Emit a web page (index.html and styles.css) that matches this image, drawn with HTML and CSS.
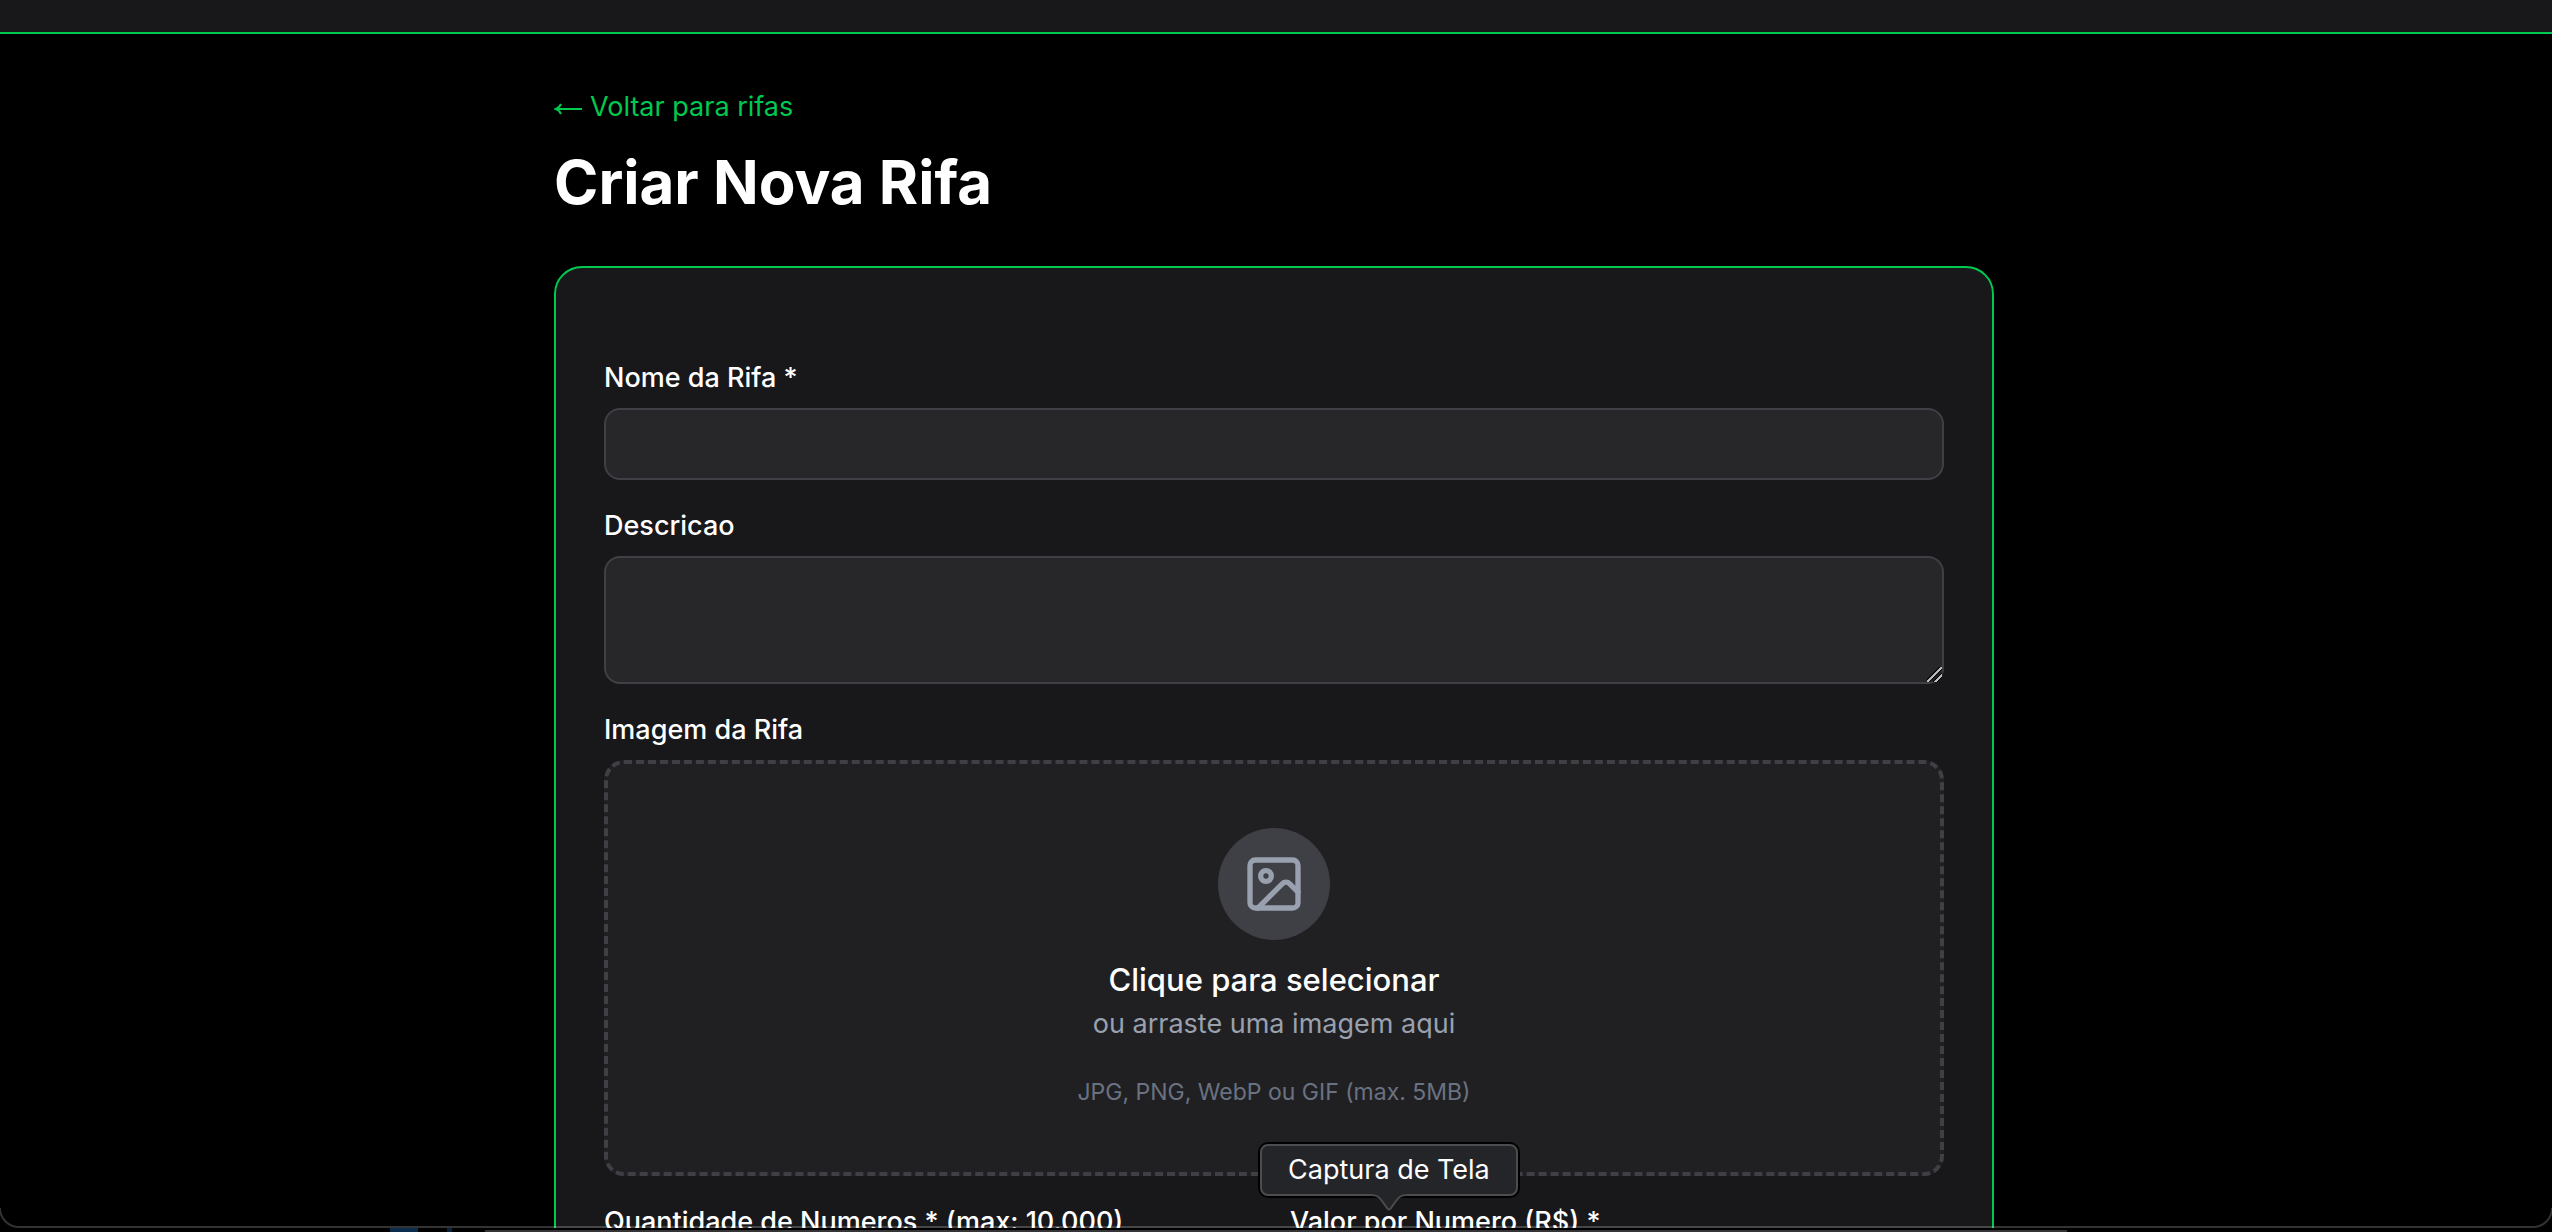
FILE: index.html
```html
<!DOCTYPE html>
<html lang="pt-BR">
<head>
  <meta charset="UTF-8" />
  <title>Criar Nova Rifa</title>
  <link rel="stylesheet" href="styles.css">
</head>
<body>
  <div class="window">
    <header class="navbar"></header>

    <main class="container">
      <a class="back-link" href="#rifas"><svg class="back-arrow" viewBox="0 0 28 12" aria-hidden="true"><path d="M28 6H2M7 1Q5 5 2 6q3 1 5 5" /></svg>Voltar para rifas</a>
      <h1 class="title">Criar Nova Rifa</h1>

      <form class="card">
        <div class="field">
          <label class="label" for="nome">Nome da Rifa *</label>
          <input class="input" id="nome" type="text" required>
        </div>

        <div class="field">
          <label class="label" for="descricao">Descricao</label>
          <textarea class="input textarea" id="descricao"></textarea>
        </div>

        <div class="field">
          <label class="label" for="imagem">Imagem da Rifa</label>
          <button class="dropzone" id="imagem" type="button">
            <span class="dropzone-icon">
              <svg viewBox="0 0 24 24" aria-hidden="true">
                <rect x="3" y="3" width="18" height="18" rx="2" />
                <circle cx="9" cy="9" r="2" />
                <path d="M21 15l-3.086-3.086a2 2 0 0 0-2.828 0L6 21" />
              </svg>
            </span>
            <span class="dropzone-title">Clique para selecionar</span>
            <span class="dropzone-text">ou arraste uma imagem aqui</span>
            <span class="dropzone-hint">JPG, PNG, WebP ou GIF (max. 5MB)</span>
          </button>
        </div>

        <div class="row">
          <div class="field">
            <label class="label" for="quantidade">Quantidade de Numeros * (max: 10.000)</label>
            <input class="input" id="quantidade" type="number" max="10000" required>
          </div>
          <div class="field">
            <label class="label" for="valor">Valor por Numero (R$) *</label>
            <input class="input" id="valor" type="number" required>
          </div>
        </div>
      </form>
    </main>
  </div>

  <div class="desktop">
    <div class="dock"></div>
  </div>

  <div class="tooltip" role="tooltip">
    Captura de Tela
    <svg class="tooltip-arrow" viewBox="0 0 36 20" aria-hidden="true">
      <path class="arrow-fill" d="M0 0v2c6 0 8 2 11 6l5 7q2 3 4 0l5-7c3-4 5-6 11-6V0z" />
      <path class="arrow-line" d="M0 2c6 0 8 2 11 6l5 7q2 3 4 0l5-7c3-4 5-6 11-6" />
    </svg>
  </div>
</body>
</html>
```

FILE: styles.css
```css
* {
  box-sizing: border-box;
}

html, body {
  margin: 0;
  height: 100%;
  overflow: hidden;
  background: #000;
  color: #fff;
  font-family: Inter, "Liberation Sans", sans-serif;
  font-size: 27px;
  line-height: 40px;
}

body {
  display: flex;
  flex-direction: column;
}

.window {
  position: relative;
  flex: 1;
  min-height: 0;
  overflow: hidden;
}

/* window edge, drawn over the page */
.window::after {
  content: "";
  position: absolute;
  inset: -2px -1px 0;
  border: 2px solid rgba(255, 255, 255, 0.2);
  border-top: 0;
  border-radius: 0 0 20px 20px;
  clip-path: inset(calc(100% - 20px) 1px 0);
  pointer-events: none;
}

.navbar {
  height: 34px;
  background: #18181b;
  border-bottom: 2px solid #00c950;
}

.container {
  max-width: 1536px;
  margin: 0 auto;
  padding: 53px 50px 0 46px;
}

.back-link {
  display: flex;
  align-items: center;
  gap: 8px;
  color: #00c950;
  text-decoration: none;
}

.back-arrow {
  width: 28px;
  height: 12px;
  margin-top: 4px;
  fill: none;
  stroke: currentColor;
  stroke-width: 2;
}

.title {
  margin: 15px 0 44px;
  font-size: 60px;
  line-height: 80px;
  font-weight: 700;
}

.card {
  display: flex;
  flex-direction: column;
  gap: 26px;
  padding: 90px 48px 48px;
  background: #18181b;
  border: 2px solid #00c950;
  border-radius: 28px;
}

.field {
  display: flex;
  flex: 1;
  flex-direction: column;
  gap: 10px;
}

.label {
  font-weight: 500;
}

.input {
  width: 100%;
  height: 72px;
  padding: 12px 24px;
  background: #27272a;
  border: 2px solid #3f3f46;
  border-radius: 16px;
  color: #fff;
  font: inherit;
}

.textarea {
  height: 128px;
  resize: vertical;
}

.textarea::-webkit-resizer {
  background: linear-gradient(135deg, transparent 39%, #000 41% 44%, #bbb 47% 54%, #000 57% 59%, transparent 61% 66%, #000 68% 70%, #bbb 73% 80%, #000 83% 85%, transparent 87%);
}

.dropzone {
  display: flex;
  flex-direction: column;
  align-items: center;
  padding: 64px;
  background: #202022;
  border: 4px dashed #3f3f46;
  border-radius: 20px;
  color: #fff;
  font: inherit;
  cursor: pointer;
}

.dropzone-icon {
  display: flex;
  align-items: center;
  justify-content: center;
  width: 112px;
  height: 112px;
  margin-bottom: 16px;
  background: #3f3f46;
  border-radius: 50%;
}

.dropzone-icon svg {
  width: 64px;
  height: 64px;
  fill: none;
  stroke: #99a1af;
  stroke-width: 2;
  stroke-linecap: round;
  stroke-linejoin: round;
}

.dropzone-title {
  font-size: 31px;
  line-height: 48px;
  font-weight: 500;
}

.dropzone-text {
  color: #99a1af;
}

.dropzone-hint {
  margin-top: 32px;
  color: #6a7282;
  font-size: 23px;
  line-height: 32px;
}

.row {
  display: flex;
  gap: 32px;
}

/* sliver of the dock under the window */
.desktop {
  padding: 2px 0 0;
  background: linear-gradient(90deg, transparent 390px, #0b2c4c 390px 418px, transparent 418px 447px, #0b2340 447px 452px, transparent 452px);
}

.dock {
  width: 62%;
  height: 2px;
  margin: 0 auto;
  background: #353537;
}

.tooltip {
  position: absolute;
  left: 1260px;
  bottom: 36px;
  padding: 4px 26px;
  background: #242529;
  border: 2px solid #4c4c4e;
  border-radius: 8px;
  box-shadow: 0 0 0 2px #000;
}

.tooltip-arrow {
  position: absolute;
  top: 100%;
  left: 50%;
  width: 36px;
  height: 20px;
  margin: -1px 0 0 -18px;
}

.arrow-fill {
  fill: #242529;
}

.arrow-line {
  fill: none;
  stroke: #4c4c4e;
  stroke-width: 2;
}
```
